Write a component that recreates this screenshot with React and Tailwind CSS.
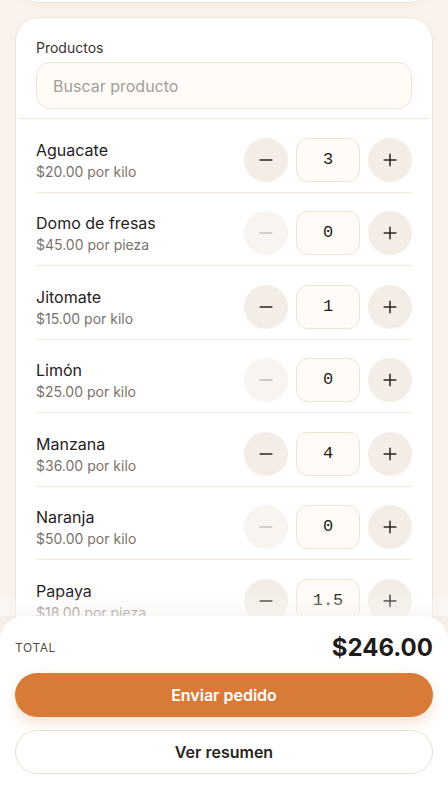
import { useState } from 'react';

const productos = [
  { nombre: 'Aguacate', precio: 20, unidad: 'kilo', qty: '3' },
  { nombre: 'Domo de fresas', precio: 45, unidad: 'pieza', qty: '0' },
  { nombre: 'Jitomate', precio: 15, unidad: 'kilo', qty: '1' },
  { nombre: 'Limón', precio: 25, unidad: 'kilo', qty: '0' },
  { nombre: 'Manzana', precio: 36, unidad: 'kilo', qty: '4' },
  { nombre: 'Naranja', precio: 50, unidad: 'kilo', qty: '0' },
  { nombre: 'Papaya', precio: 18, unidad: 'pieza', qty: '1.5' },
];

function Minus({ disabled }) {
  return (
    <svg width="20" height="20" viewBox="0 0 24 24" fill="none" stroke={disabled ? '#c4beb7' : '#2b2622'} strokeWidth="1.8" strokeLinecap="round">
      <path d="M5 12h14" />
    </svg>
  );
}

function Plus() {
  return (
    <svg width="20" height="20" viewBox="0 0 24 24" fill="none" stroke="#2b2622" strokeWidth="1.8" strokeLinecap="round">
      <path d="M5 12h14M12 5v14" />
    </svg>
  );
}

function Fila({ p }) {
  const vacio = Number(p.qty) === 0;
  return (
    <div className="flex items-center justify-between pt-[18.5px] pb-[10px] border-b border-[#f1e8de]">
      <div className="flex flex-col">
        <span className="text-[16px] leading-6 text-[#27211d]">{p.nombre}</span>
        <span className="text-[14px] leading-5 text-[#7b726b]">${p.precio.toFixed(2)} por {p.unidad}</span>
      </div>
      <div className="flex items-center gap-2">
        <button className={`w-11 h-11 rounded-full flex items-center justify-center ${vacio ? 'bg-[#f8f5f1]' : 'bg-[#f3ede6]'}`}>
          <Minus disabled={vacio} />
        </button>
        <div className="w-16 h-11 rounded-xl border border-[#efe3d4] bg-[#fffbf7] flex items-center justify-center text-[17px] text-[#1f1b18]" style={{ fontFamily: '"Liberation Mono", monospace' }}>
          {p.qty}
        </div>
        <button className="w-11 h-11 rounded-full bg-[#f3ede6] flex items-center justify-center">
          <Plus />
        </button>
      </div>
    </div>
  );
}

export default function App() {
  const [busqueda, setBusqueda] = useState('');
  return (
    <div className="relative h-[791px] overflow-hidden bg-[#faf3ed]" style={{ fontFamily: 'Inter, "Noto Sans", sans-serif' }}>
      <div className="px-[15px]">
        <div className="-mt-[60px] h-[63px] rounded-3xl bg-white border border-[#efe5da] shadow-[0_2px_8px_rgba(120,80,40,0.06)]" />
        <div className="mt-[14px] rounded-3xl bg-white border border-[#efe5da] shadow-[0_2px_10px_rgba(120,80,40,0.05)] pb-4">
          <div className="px-5 pt-5 pb-[9px]">
            <label className="block text-[14px] leading-5 text-[#3a332e] mb-1">Productos</label>
            <input
              value={busqueda}
              onChange={e => setBusqueda(e.target.value)}
              placeholder="Buscar producto"
              className="w-full h-[47px] rounded-[14px] border border-[#efe3d4] bg-[#fffbf7] px-4 text-[16px] text-[#27211d] placeholder:text-[#a29d97] outline-none"
            />
          </div>
          <div className="mx-[3px] h-px bg-[#f1e8de]" />
          <div className="px-5">
            {productos.map(p => <Fila key={p.nombre} p={p} />)}
          </div>
        </div>
      </div>

      <div className="absolute left-0 right-0 bottom-0">
        <div className="h-6 bg-gradient-to-b from-transparent to-white/60" />
        <div className="bg-white rounded-t-3xl shadow-[0_-6px_18px_rgba(120,80,40,0.06)] px-[15px] pt-[16px] pb-[17px]">
          <div className="flex items-center justify-between h-8">
            <span className="text-[12px] tracking-wider text-[#534b45]">TOTAL</span>
            <span className="text-[24px] font-bold text-[#1f1b18]">$246.00</span>
          </div>
          <button className="mt-[9px] w-full h-11 rounded-full bg-[#d97b38] text-white text-[16px] font-semibold shadow-[0_6px_14px_rgba(217,123,56,0.22)]">
            Enviar pedido
          </button>
          <button className="mt-[13px] w-full h-11 rounded-full bg-white border border-[#eadfd1] text-[#2a2420] text-[16px] font-semibold">
            Ver resumen
          </button>
        </div>
      </div>
    </div>
  );
}
